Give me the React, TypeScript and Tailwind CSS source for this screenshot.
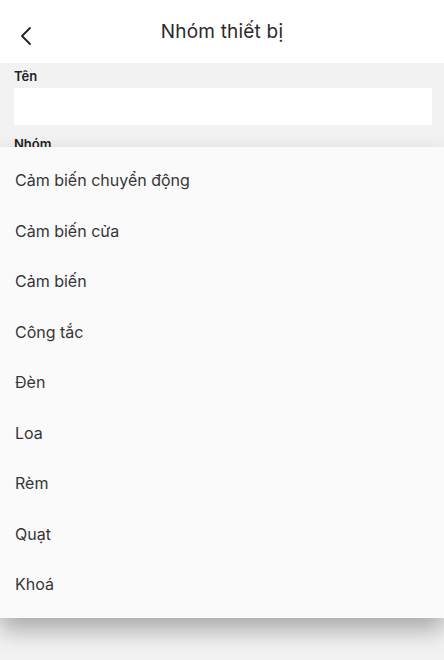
import { useState } from "react";

const GROUPS = [
    "Cảm biến chuyển động",
    "Cảm biến cửa",
    "Cảm biến",
    "Công tắc",
    "Đèn",
    "Loa",
    "Rèm",
    "Quạt",
    "Khoá",
];

export default function App() {
    const [name, setName] = useState("");
    const [selected, setSelected] = useState<string | null>(null);
    const [isOpen, setIsOpen] = useState(true);

    return (
        <div className="relative h-[660px] w-[444px] overflow-hidden bg-[#f2f2f2] text-[#333333] font-['Inter','Noto_Sans',sans-serif]">
            <div className="relative flex h-[63px] items-center justify-center bg-white">
                <button className="absolute left-[12px] top-[22px] flex h-7 w-7 items-center justify-center text-[#222222]">
                    <svg width="14" height="20" viewBox="0 0 14 20" fill="none">
                        <polyline points="11,2 3,10 11,18" stroke="currentColor" strokeWidth="1.8" strokeLinecap="round" strokeLinejoin="round" />
                    </svg>
                </button>
                <h1 className="pt-[2px] text-[19px] font-normal tracking-[0.2px] text-[#2a2a2a]">Nhóm thiết bị</h1>
            </div>

            <div className="flex flex-col pl-[14px] pr-[12px] pt-[5px]">
                <label className="text-[13px] font-semibold leading-[17px] text-[#222222]">Tên</label>
                <input
                    value={name}
                    onChange={(event) => setName(event.target.value)}
                    className="mt-[3px] h-[37px] w-full bg-white px-3 text-sm outline-none"
                />
                <label className="mt-[11px] text-[13px] font-semibold leading-[17px] text-[#222222]" onClick={() => setIsOpen(true)}>
                    Nhóm {selected ? `: ${selected}` : ""}
                </label>
            </div>

            {isOpen && (
                <div className="absolute left-0 right-0 top-[147px] bg-[#fafafa] py-2 shadow-[0_12px_22px_rgba(0,0,0,0.3)]">
                    {GROUPS.map((group) => (
                        <div
                            key={group}
                            onClick={() => {
                                setSelected(group);
                                setIsOpen(false);
                            }}
                            className="flex h-[50.5px] items-center px-[15px] text-[16px] text-[#363636]"
                        >
                            {group}
                        </div>
                    ))}
                </div>
            )}
        </div>
    );
}
